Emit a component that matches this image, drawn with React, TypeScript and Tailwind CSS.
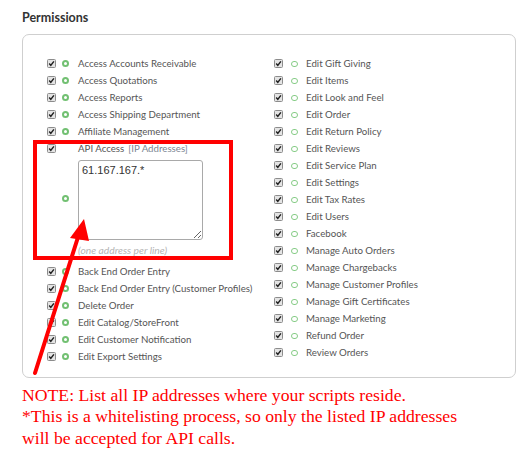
import React from 'react'

const LEFT_TOP = [
  'Access Accounts Receivable',
  'Access Quotations',
  'Access Reports',
  'Access Shipping Department',
  'Affiliate Management',
]

const LEFT_BOTTOM = [
  'Back End Order Entry',
  'Back End Order Entry (Customer Profiles)',
  'Delete Order',
  'Edit Catalog/StoreFront',
  'Edit Customer Notification',
  'Edit Export Settings',
]

const RIGHT = [
  'Edit Gift Giving',
  'Edit Items',
  'Edit Look and Feel',
  'Edit Order',
  'Edit Return Policy',
  'Edit Reviews',
  'Edit Service Plan',
  'Edit Settings',
  'Edit Tax Rates',
  'Edit Users',
  'Facebook',
  'Manage Auto Orders',
  'Manage Chargebacks',
  'Manage Customer Profiles',
  'Manage Gift Certificates',
  'Manage Marketing',
  'Refund Order',
  'Review Orders',
]

function Check() {
  return (
    <svg width="9" height="9" viewBox="0 0 9 9" className="shrink-0">
      <rect x="0.5" y="0.5" width="8" height="8" rx="1" fill="#e4e4e4" stroke="#8c8c8c" />
      <path d="M2.2 4.6 L3.8 6.4 L6.9 2.4" stroke="#1f1f1f" strokeWidth="1.5" fill="none" />
    </svg>
  )
}

function Dot({ light }: { light?: boolean }) {
  return light ? (
    <span className="block w-[7px] h-[6px] rounded-full border-[1.5px] border-[#86cc86] shrink-0" />
  ) : (
    <span className="block w-[7px] h-[7px] rounded-full border-2 border-[#72c072] shrink-0" />
  )
}

function Row({ label, right }: { label: string; right?: boolean }) {
  return (
    <div className="flex items-center h-[17px]">
      <Check />
      <span className={right ? 'ml-[8px]' : 'ml-[6px]'}>
        <Dot light={right} />
      </span>
      <span className={`${right ? 'ml-[8px]' : 'ml-[9px]'} whitespace-nowrap text-[9.7px] text-[#555]`}>{label}</span>
    </div>
  )
}

export default function App() {
  return (
    <div className="relative w-[532px] h-[454px] bg-white font-['Lato',sans-serif] overflow-hidden">
      <div className="pl-[22px] pt-[10px]">
        <h2 className="text-[12.5px] leading-[16px] font-bold text-[#333]">Permissions</h2>

        <div className="mt-[8px] w-[494px] border border-[#cfcfcf] rounded-[7px] pt-[20px] pl-[24px] pb-[12px]">
          <div className="grid grid-cols-[227px_1fr]">
            {/* left column */}
            <div className="flex flex-col">
              {LEFT_TOP.map((l) => <Row key={l} label={l} />)}

              {/* API access block */}
              <div className="flex pb-[6px]">
                <div className="h-[17px] flex items-center"><Check /></div>
                <div className="ml-[6px] self-center"><Dot /></div>
                <div className="ml-[9px] flex flex-col">
                  <div className="h-[17px] flex items-center whitespace-nowrap text-[9.7px] text-[#555]">
                    API Access<span className="ml-[4px] text-[#7b8592]">[IP Addresses]</span>
                  </div>
                  <textarea
                    readOnly
                    defaultValue="61.167.167.*"
                    className="mt-[2.5px] w-[125px] h-[80px] border border-[#a9a9a9] rounded-[3px] px-[3px] py-[2px] text-[11px] leading-[14px] text-[#333] font-['Liberation_Sans',sans-serif] outline-none"
                  />
                  <div className="mt-[3px] h-[14px] leading-[14px] text-[10.3px] italic text-[#b5b5b5]">(one address per line)</div>
                </div>
              </div>

              {LEFT_BOTTOM.map((l) => <Row key={l} label={l} />)}
            </div>

            {/* right column */}
            <div className="flex flex-col">
              {RIGHT.map((l) => <Row key={l} label={l} right />)}
            </div>
          </div>
        </div>

        <div className="mt-[7px] font-['Liberation_Serif',serif] text-[17.7px] leading-[21.5px] text-[#ff0000]">
          <p>NOTE: List all IP addresses where your scripts reside.</p>
          <p>*This is a whitelisting process, so only the listed IP addresses</p>
          <p>will be accepted for API calls.</p>
        </div>
      </div>

      {/* annotation: highlight box */}
      <div className="absolute left-[33px] top-[140px] w-[200px] h-[120px] border-[4px] border-[#ff0000] pointer-events-none" />

      {/* annotation: arrow */}
      <svg className="absolute left-0 top-0 pointer-events-none" width="532" height="454" viewBox="0 0 532 454">
        <line x1="35" y1="373" x2="79" y2="234" stroke="#ff0000" strokeWidth="4" strokeLinecap="round" />
        <polygon points="84,219 70,238 89,241" fill="#ff0000" />
      </svg>
    </div>
  )
}
